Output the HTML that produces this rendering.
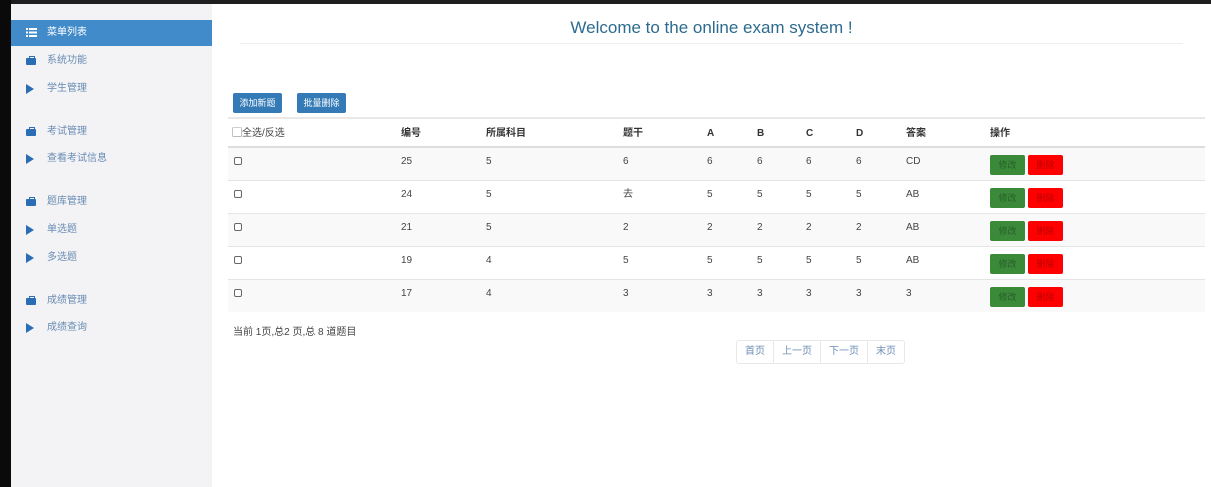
<!DOCTYPE html><html><head><meta charset="utf-8"><style>
*{margin:0;padding:0;box-sizing:border-box}
body{width:1211px;height:487px;background:#fff;position:relative;overflow:hidden;font-family:"Liberation Sans","Noto Sans CJK SC",sans-serif;font-size:10px;color:#333}
.a{position:absolute}
.top{left:0;top:0;width:1211px;height:4px;background:#1e1e1e}
.lb{left:0;top:0;width:11px;height:487px;background:#0a0a0a}
.side{left:11px;top:4px;width:201px;height:483px;background:#f3f3f6}
.mi{position:absolute;left:11px;width:201px;height:26px;line-height:26px;padding-left:36px;color:#6a8cb3;font-size:10px}
.mi.act{background:#428bca;color:#fff}
.ic{position:absolute;left:15px;top:9px}
.tri{width:0;height:0;border-left:8px solid #2a6db5;border-top:5px solid transparent;border-bottom:5px solid transparent;top:8px}
.brief{width:10px;height:7px;background:#2a6db5;top:10px;border-radius:1px}
.brief:before{content:"";position:absolute;left:3px;top:-2px;width:4px;height:2px;border:1px solid #2a6db5;border-bottom:none}
.btn{height:20px;line-height:20px;background:#337ab7;color:#fff;border-radius:2px;font-size:9px;text-align:center}
.row{left:228px;width:977px;height:33px;border-top:1px solid #e4e4e4}
.c{position:absolute;top:7px;font-size:10px;line-height:14px;height:14px;color:#444}
.cb{position:absolute;left:6px;top:9px;width:8px;height:8px;border:1px solid #666;border-radius:2px;background:#fff}
.g{position:absolute;left:762px;top:7px;width:35px;height:20px;background:#3a8a3a;border-radius:2px;color:#2a5e2a;font-size:9px;text-align:center;line-height:20px}
.r{position:absolute;left:800px;top:7px;width:35px;height:20px;background:#f00;border-radius:2px;color:#b00;font-size:9px;text-align:center;line-height:20px}
.pg{top:340px;left:736px;height:24px;border:1px solid #e8e8e8;border-radius:3px;display:flex}
.pg span{padding:0 8px;line-height:22px;color:#6d8fb5;border-left:1px solid #e8e8e8;font-size:10px}
.pg span:first-child{border-left:none}
.h .c{top:8px;font-weight:bold;color:#333}
</style></head><body>
<div class="a top"></div><div class="a lb"></div><div class="a side"></div>
<div class="mi act" style="top:20px"><svg class="a" style="left:15px;top:8px" width="11" height="9"><rect x="0" y="0" width="2" height="2" fill="#fff"/><rect x="3" y="0" width="8" height="2" fill="#fff"/><rect x="0" y="3.5" width="2" height="2" fill="#fff"/><rect x="3" y="3.5" width="8" height="2" fill="#fff"/><rect x="0" y="7" width="2" height="2" fill="#fff"/><rect x="3" y="7" width="8" height="2" fill="#fff"/></svg>菜单列表</div>
<div class="mi" style="top:48px"><div class="a ic brief"></div>系统功能</div>
<div class="mi" style="top:76px"><div class="a ic tri"></div>学生管理</div>
<div class="mi" style="top:119px"><div class="a ic brief"></div>考试管理</div>
<div class="mi" style="top:146px"><div class="a ic tri"></div>查看考试信息</div>
<div class="mi" style="top:189px"><div class="a ic brief"></div>题库管理</div>
<div class="mi" style="top:217px"><div class="a ic tri"></div>单选题</div>
<div class="mi" style="top:245px"><div class="a ic tri"></div>多选题</div>
<div class="mi" style="top:288px"><div class="a ic brief"></div>成绩管理</div>
<div class="mi" style="top:315px"><div class="a ic tri"></div>成绩查询</div>
<div class="a" style="left:240px;top:18px;width:943px;text-align:center;font-size:17px;color:#2c6b8e">Welcome to the online exam system !</div>
<div class="a" style="left:240px;top:43px;width:943px;height:1px;background:#eee"></div>
<div class="a btn" style="left:233px;top:93px;width:49px">添加新题</div>
<div class="a btn" style="left:297px;top:93px;width:49px">批量删除</div>
<div class="a" style="left:228px;top:117px;width:977px;height:2px;background:#e8e8e8"></div>
<div class="a h" style="left:228px;top:119px;width:977px;height:28px">
<span class="c" style="left:4px;font-weight:normal;color:#444">▢全选/反选</span><span class="c" style="left:173px">编号</span><span class="c" style="left:258px">所属科目</span><span class="c" style="left:395px">题干</span><span class="c" style="left:479px">A</span><span class="c" style="left:529px">B</span><span class="c" style="left:578px">C</span><span class="c" style="left:628px">D</span><span class="c" style="left:678px">答案</span><span class="c" style="left:762px">操作</span></div>
<div class="a" style="left:228px;top:146px;width:977px;height:2px;background:#ddd"></div>
<div class="a row" style="top:148px;background:#f9f9f9;border-top:none"><div class="cb"></div><span class="c" style="left:173px">25</span><span class="c" style="left:258px">5</span><span class="c" style="left:395px">6</span><span class="c" style="left:479px">6</span><span class="c" style="left:529px">6</span><span class="c" style="left:578px">6</span><span class="c" style="left:628px">6</span><span class="c" style="left:678px">CD</span><div class="g">修改</div><div class="r">删除</div></div>
<div class="a row" style="top:180px"><div class="cb"></div><span class="c" style="left:173px">24</span><span class="c" style="left:258px">5</span><span class="c" style="left:395px">去</span><span class="c" style="left:479px">5</span><span class="c" style="left:529px">5</span><span class="c" style="left:578px">5</span><span class="c" style="left:628px">5</span><span class="c" style="left:678px">AB</span><div class="g">修改</div><div class="r">删除</div></div>
<div class="a row" style="top:213px;background:#f9f9f9"><div class="cb"></div><span class="c" style="left:173px">21</span><span class="c" style="left:258px">5</span><span class="c" style="left:395px">2</span><span class="c" style="left:479px">2</span><span class="c" style="left:529px">2</span><span class="c" style="left:578px">2</span><span class="c" style="left:628px">2</span><span class="c" style="left:678px">AB</span><div class="g">修改</div><div class="r">删除</div></div>
<div class="a row" style="top:246px"><div class="cb"></div><span class="c" style="left:173px">19</span><span class="c" style="left:258px">4</span><span class="c" style="left:395px">5</span><span class="c" style="left:479px">5</span><span class="c" style="left:529px">5</span><span class="c" style="left:578px">5</span><span class="c" style="left:628px">5</span><span class="c" style="left:678px">AB</span><div class="g">修改</div><div class="r">删除</div></div>
<div class="a row" style="top:279px;background:#f9f9f9"><div class="cb"></div><span class="c" style="left:173px">17</span><span class="c" style="left:258px">4</span><span class="c" style="left:395px">3</span><span class="c" style="left:479px">3</span><span class="c" style="left:529px">3</span><span class="c" style="left:578px">3</span><span class="c" style="left:628px">3</span><span class="c" style="left:678px">3</span><div class="g">修改</div><div class="r">删除</div></div>
<div class="a" style="left:233px;top:326px;font-size:10px;line-height:14px;color:#444">当前 1页,总2 页,总 8 道题目</div>
<div class="a pg"><span>首页</span><span>上一页</span><span>下一页</span><span>末页</span></div>
</body></html>
